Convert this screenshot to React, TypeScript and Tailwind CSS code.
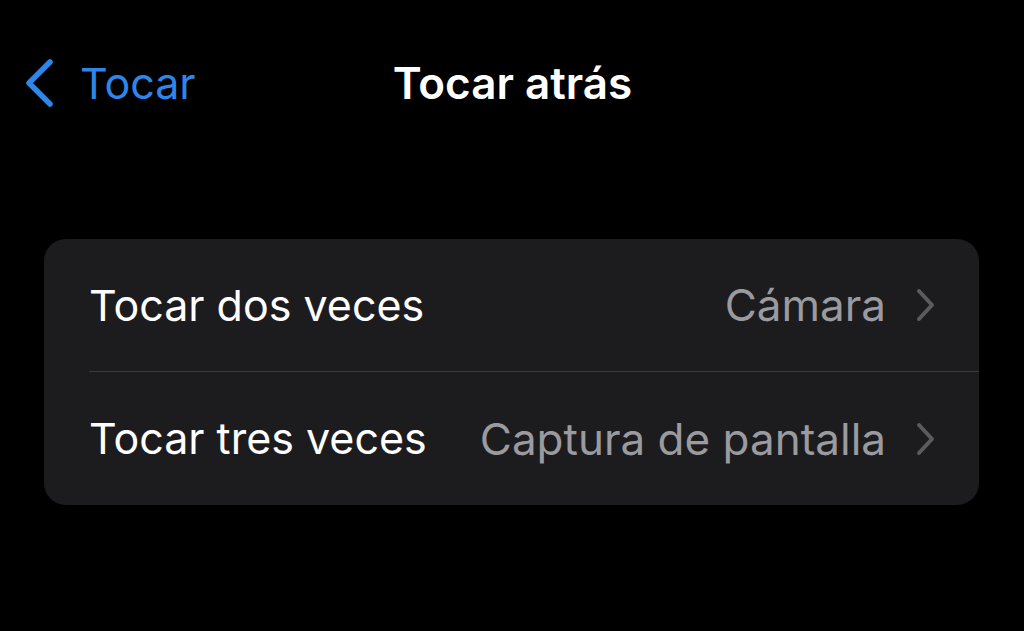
const opciones = [
  { etiqueta: 'Tocar dos veces', valor: 'Cámara' },
  { etiqueta: 'Tocar tres veces', valor: 'Captura de pantalla' },
];

function BackChevron() {
  return (
    <svg width="34" height="50" viewBox="0 0 34 50" fill="none">
      <path d="M28 4 L7 25 L28 46" stroke="#2f86ea" strokeWidth="5.5" strokeLinecap="round" strokeLinejoin="round" />
    </svg>
  );
}

function Disclosure() {
  return (
    <svg width="20" height="34" viewBox="0 0 20 34" fill="none">
      <path d="M3 3 L16 17 L3 31" stroke="#5b5b5f" strokeWidth="4" strokeLinecap="round" strokeLinejoin="round" />
    </svg>
  );
}

export default function App() {
  return (
    <div className="w-[1024px] h-[631px] bg-black overflow-hidden font-['Inter',sans-serif]">
      <header className="relative h-[170px]">
        <div className="absolute left-[22px] top-[58px] flex items-center gap-[24px] text-[#2f86ea]">
          <BackChevron />
          <span className="text-[43px] leading-none">Tocar</span>
        </div>
        <h1 className="absolute left-0 right-0 top-[61px] text-center text-white text-[44px] leading-none font-semibold pl-[1px]">
          Tocar atrás
        </h1>
      </header>

      <div className="mt-[69px] mx-[44px] w-[935px] rounded-[22px] bg-[#1c1c1e] overflow-hidden">
        {opciones.map((op, i) => (
          <div key={op.etiqueta} className="pl-[45px]">
            <div
              className={
                'h-[133px] flex items-center pr-[43px] ' +
                (i < opciones.length - 1 ? 'border-b border-[#3a3a3c]' : '')
              }
            >
              <span className="text-white text-[43px]">{op.etiqueta}</span>
              <span className="ml-auto text-[#9a9a9f] text-[44px]">{op.valor}</span>
              <span className="ml-[30px] flex">
                <Disclosure />
              </span>
            </div>
          </div>
        ))}
      </div>
    </div>
  );
}
